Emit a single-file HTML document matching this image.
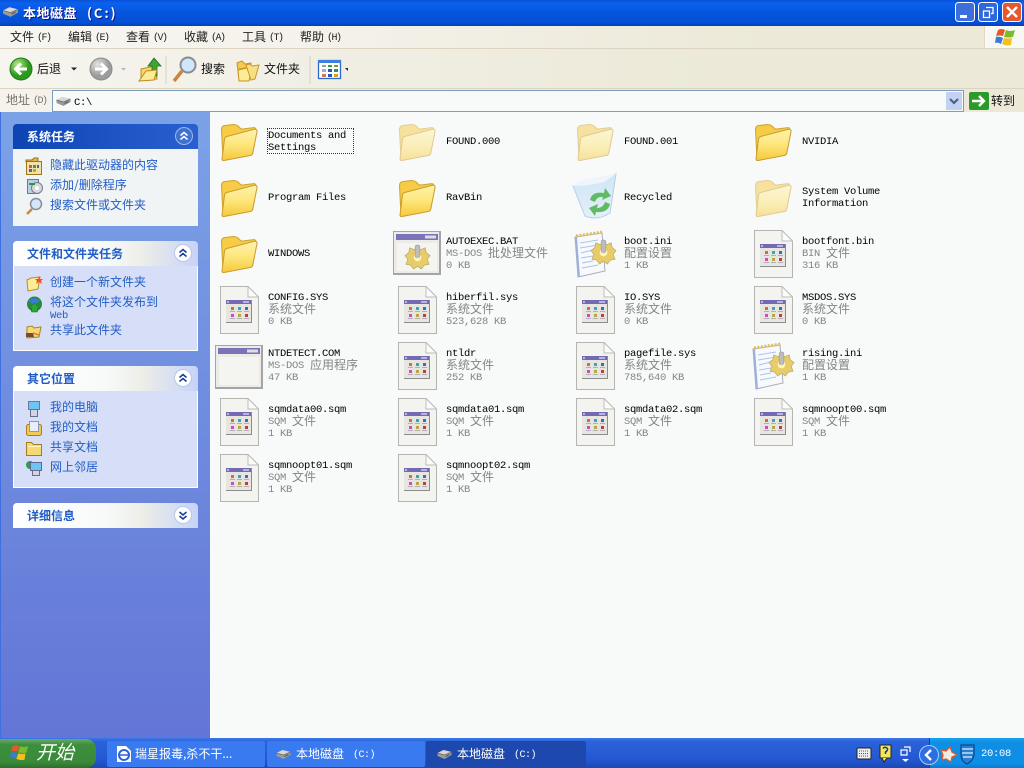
<!DOCTYPE html>
<html lang="zh"><head><meta charset="utf-8"><title>本地磁盘 (C:)</title>
<style>
html,body{margin:0;padding:0;width:1024px;height:768px;overflow:hidden;background:#f8fafa}
body{position:relative;font:10.500px/12px "Liberation Mono","WenQuanYi Zen Hei",monospace;letter-spacing:-.3px;color:#000}
div,svg{position:absolute}
i{font:normal 12px/1px "WenQuanYi Zen Hei","Noto Sans CJK SC",sans-serif;letter-spacing:0;position:relative;top:1px}
.k{font-size:10px;letter-spacing:-1.500px;margin-left:3px}
.t{white-space:pre;line-height:12px;margin-top:1px}
.g{color:#858585}
.m{top:32px;white-space:pre;line-height:12px;color:#222}
.p{left:50px;color:#215dc6;white-space:pre;line-height:12px;margin-top:1px}
.h{left:27px;font:bold 12px/12px "WenQuanYi Zen Hei","Noto Sans CJK SC",sans-serif;letter-spacing:0;color:#215dc6;white-space:pre}
.ph{left:13px;width:185px;height:25px;border-radius:4px 4px 0 0;background:linear-gradient(90deg,#fff 0,#f8fafa 50%,#edeee8 70%,#c6d3f7 100%)}
.pb{left:13px;width:183px;border:1px solid #fff;border-top:0;background:#d6dff7}
.tb{top:741px;height:26px;border-radius:2px;background:#3a7af0}
</style></head><body>
<svg width="0" height="0" style="left:0;top:0">
<defs>
<linearGradient id="fg" x1="0" y1="0" x2="0" y2="1"><stop offset="0" stop-color="#fff3ae"/><stop offset=".5" stop-color="#fde67a"/><stop offset="1" stop-color="#f5c83c"/></linearGradient>
<linearGradient id="rb" x1="0" y1="0" x2="0" y2="1"><stop offset="0" stop-color="#cfe6f6"/><stop offset="1" stop-color="#e4eff8"/></linearGradient>
<symbol id="fo" viewBox="0 0 36 36"><path d="M.5 6Q.5 1.500 4 1.500L12 .5Q16 .5 18 3.500L20 5 32 3.500Q34 3.500 34 6L30 30 2 35Z" fill="#f6cb45" stroke="#cda232"/><path d="M3.500 14Q4 12.500 6 12L33 5Q35.500 5 35 7.500L31 28Q30.500 30 29 30.500L3 35.500Q1 35.800 1 34Z" fill="url(#fg)" stroke="#cb9c2c"/></symbol>
<symbol id="sf" viewBox="0 0 39 48"><path d="M.5.5H28L38.500 11V47.500H.5Z" fill="#f3f3ef" stroke="#b4b4b0"/><path d="M28 .5V11H38.500Z" fill="#fbfbf9" stroke="#bcbcb8"/><rect x="6" y="14" width="26" height="23" fill="#8c8c8c"/><rect x="6" y="14" width="25" height="22" fill="#e6e5e0"/><rect x="6" y="14" width="25" height="4" fill="#736ab4"/><rect x="23" y="15.500" width="6" height="1" fill="#fff"/><rect x="7" y="15.500" width="2" height="1" fill="#fff"/><rect x="11" y="21" width="3" height="3" fill="#d96b3a"/><rect x="18" y="21" width="3" height="3" fill="#35a8b8"/><rect x="25" y="21" width="3" height="3" fill="#3f6cc0"/><rect x="11" y="28" width="3" height="3" fill="#d845c0"/><rect x="18" y="28" width="3" height="3" fill="#b9a842"/><rect x="25" y="28" width="3" height="3" fill="#c83838"/><path d="M10 25.500H15M17 25.500H22M24 25.500H29M10 32.500H15M17 32.500H22M24 32.500H29" stroke="#b0b0bc"/></symbol>
<symbol id="ap" viewBox="0 0 48 44"><rect width="48" height="44" fill="#a4a4a4"/><rect x="1" y="1" width="45" height="41" fill="#ecebe8"/><rect x="3" y="3" width="42" height="6" fill="#7b72b8"/><rect x="32" y="4.500" width="11" height="3" fill="#ddd"/><rect x="4" y="12" width="40" height="28" fill="#f4f4f0"/></symbol>
<symbol id="ge" viewBox="0 0 28 28"><path d="M14 2 17 6 22 4 23 9 27 12 24 16 26 21 21 22 18 26 14 23 10 26 7 22 2 21 4 16 1 12 5 9 6 4 11 6Z" fill="#e8cc6a" stroke="#b8a862" stroke-width=".7"/><circle cx="14" cy="14" r="4" fill="#fff3b5"/><rect x="11.500" y="1" width="5" height="13" rx="2" fill="#bdbdbd" stroke="#8e8e96" stroke-width=".5"/></symbol>
<symbol id="in" viewBox="0 0 44 48"><path d="M2 7 29 3 32 41 5 47Z" fill="#f8f9fd" stroke="#a8adbc"/><path d="M3 6 30 2" stroke="#e0bd55" stroke-width="3" stroke-dasharray="2 1.500"/><path d="M7 13 25 10M7 18 25 15M8 23 20 20M8 28 20 26M9 33 20 31M9 38 25 35" stroke="#a8c4ec"/><path d="M3 7 6 47" stroke="#9cb0e0" stroke-width="2"/><use href="#ge" x="17" y="9" width="27" height="27"/></symbol>
<symbol id="di" viewBox="0 0 16 12"><path d="M1 5 7 2 15 4V7L8 11 1 8Z" fill="#9a9a9a"/><path d="M1 5 7 2 15 4 8 7Z" fill="#d8d8d8"/><path d="M1 5 8 7 15 4" stroke="#666" fill="none" stroke-width=".7"/><path d="M9 8.500 13 6.500" stroke="#5c5c5c"/></symbol>
<symbol id="wl" viewBox="0 0 22 20"><path d="M3 3Q6 1 10 3L8 9Q5 8 1 9Z" fill="#e8562a"/><path d="M11 3Q15 5 20 3L18 10Q14 11 9 10Z" fill="#7cbb30"/><path d="M1 10Q4 9 8 11L6 17Q3 15 0 16Z" fill="#3b7ad8"/><path d="M9 11Q13 12 17 11L16 18Q11 19 7 17Z" fill="#f4c020"/></symbol>
</defs></svg>

<!-- title bar -->
<div style="left:0;top:0;width:1024px;height:26px;background:linear-gradient(180deg,#0a50d8 0,#0b62ee 12%,#0555dd 50%,#0450d6 85%,#0340b8 100%)"></div>
<svg style="left:2px;top:5px" width="17" height="13"><use href="#di" width="17" height="13"/></svg>
<div style="left:23px;top:6px;color:#fff;font:bold 13px/13px 'WenQuanYi Zen Hei','Noto Sans CJK SC',sans-serif;letter-spacing:.5px;white-space:pre;text-shadow:1px 1px #0f1089">本地磁盘<span style="margin-left:10px;letter-spacing:2px">(C:)</span></div>
<svg style="left:955px;top:2px" width="69" height="21">
<rect x=".5" y=".5" width="19" height="19" rx="3" fill="#3c6fdc" stroke="#fff"/><rect x="5" y="13" width="7" height="3" fill="#fff"/>
<rect x="23.500" y=".5" width="19" height="19" rx="3" fill="#2f68da" stroke="#fff"/><path d="M31 5.500h7v6h-2M28.500 9h6v6.500h-6z" fill="none" stroke="#fff" stroke-width="1.300"/>
<rect x="47.500" y=".5" width="19" height="19" rx="3" fill="#e5572e" stroke="#fff"/><path d="M52 5 62 15M62 5 52 15" stroke="#fff" stroke-width="2.400"/>
</svg>

<!-- menu -->
<div style="left:0;top:26px;width:1024px;height:22px;background:linear-gradient(90deg,#f7f6f1 0,#f4f2ea 30%,#ece9d8 75%)"></div>
<div style="left:0;top:48px;width:1024px;height:1px;background:#dcd4c0"></div>
<div class="m" style="left:10px"><i>文件</i><span class="k">(F)</span></div>
<div class="m" style="left:68px"><i>编辑</i><span class="k">(E)</span></div>
<div class="m" style="left:126px"><i>查看</i><span class="k">(V)</span></div>
<div class="m" style="left:184px"><i>收藏</i><span class="k">(A)</span></div>
<div class="m" style="left:242px"><i>工具</i><span class="k">(T)</span></div>
<div class="m" style="left:300px"><i>帮助</i><span class="k">(H)</span></div>
<div style="left:984px;top:26px;width:40px;height:22px;background:#f8f8f5;border-left:1px solid #e0d8c4"></div>
<svg style="left:995px;top:27px" width="22" height="20"><use href="#wl" width="22" height="20"/></svg>

<!-- toolbar -->
<div style="left:0;top:49px;width:1024px;height:39px;background:linear-gradient(90deg,#f6f5ef 0,#f1efe5 30%,#ece9d8 70%)"></div>
<div style="left:0;top:88px;width:1024px;height:1px;background:#dcd4c0"></div>
<svg style="left:8px;top:56px" width="340" height="28">
<defs><radialGradient id="gb" cx=".35" cy=".3"><stop offset="0" stop-color="#bde88a"/><stop offset="1" stop-color="#2a9a1e"/></radialGradient><radialGradient id="gy" cx=".35" cy=".3"><stop offset="0" stop-color="#e4e4e4"/><stop offset="1" stop-color="#9c9c9c"/></radialGradient></defs>
<circle cx="13" cy="13" r="11" fill="url(#gb)" stroke="#1f7a18"/><path d="M19 13H8M13 7.500 7.500 13 13 18.500" fill="none" stroke="#fff" stroke-width="3"/>
<path d="M63 11.500h6l-3 3z" fill="#222"/>
<circle cx="93" cy="13" r="11" fill="url(#gy)" stroke="#8a8a8a"/><path d="M87 13H98M93 7.500 98.500 13 93 18.500" fill="none" stroke="#fff" stroke-width="3"/>
<path d="M113 12h5l-2.500 2.500z" fill="#b5b5b5"/>
<path d="M133 13 147 10 149 23 133 24Z" fill="#f7d767" stroke="#b98f25"/><path d="M144 20V10H140L146 2 153 10H149V20Z" fill="#3ea62e" stroke="#1e6f1b" stroke-width=".8"/><path d="M131 25 138 15 149 14 146 24Z" fill="#fdeb95" stroke="#b98f25"/>
<path d="M158 0V28" stroke="#d8d2bd" stroke-width="1"/>
<circle cx="180" cy="9" r="7.500" fill="#cfe6fb" stroke="#8b8b92" stroke-width="2"/><path d="M174 15 166 25" stroke="#d0843a" stroke-width="3.500"/>
<path d="M229 7 234 5 237 8 243 7 243 11 231 13 231 24Z" fill="#f4c94c" stroke="#c7962a"/><path d="M230 14 244 11 241 25 231 25Z" fill="#fdeb95" stroke="#c7962a"/><path d="M238 9 242 8 244 10 251 9 247 23 243 24Z" fill="#f8e080" stroke="#c7962a"/>
<path d="M302 0V28" stroke="#d8d2bd" stroke-width="1"/>
<rect x="310.500" y="4.500" width="22" height="18" fill="#fff" stroke="#2c6ad0" stroke-width="1.300"/><rect x="310" y="4" width="23" height="3" fill="#3c7fe0"/>
<path d="M314 9h4v2h-4z" fill="#9a9ab0"/><path d="M320 9h4v2h-4z" fill="#3c9a50"/><path d="M326 9h4v2h-4z" fill="#70a040"/><path d="M314 13h4v3h-4z" fill="#9ab0d0"/><path d="M320 13h4v3h-4z" fill="#2858b0"/><path d="M326 13h4v3h-4z" fill="#2a9070"/><path d="M314 18h4v3h-4z" fill="#e07050"/><path d="M320 18h4v3h-4z" fill="#2858b0"/><path d="M326 18h4v3h-4z" fill="#d8a020"/>
<path d="M337 12h6l-3 3z" fill="#222"/>
</svg>
<div class="t" style="left:37px;top:63px;color:#111"><i>后退</i></div>
<div class="t" style="left:201px;top:63px;color:#111"><i>搜索</i></div>
<div class="t" style="left:264px;top:63px;color:#111"><i>文件夹</i></div>

<!-- address -->
<div style="left:0;top:89px;width:1024px;height:23px;background:linear-gradient(90deg,#f5f3ec 0,#ece9d8 70%)"></div>
<div class="t" style="left:6px;top:94px;color:#75736a"><i>地址</i><span class="k">(D)</span></div>
<div style="left:52px;top:90px;width:910px;height:20px;border:1px solid #7f9db9;background:#f8fafa"></div>
<svg style="left:55px;top:95px" width="17" height="12"><use href="#di" width="17" height="12"/></svg>
<div class="t" style="left:74px;top:96px">C:\</div>
<svg style="left:946px;top:92px" width="16" height="18"><rect width="16" height="18" fill="#c2d2f2"/><path d="M4 7 8 11 12 7" fill="none" stroke="#4d6185" stroke-width="2.200"/></svg>
<svg style="left:969px;top:92px" width="20" height="18"><rect width="20" height="18" rx="2" fill="#2b9a2b"/><path d="M3 9H15M10 4 15 9 10 14" fill="none" stroke="#fff" stroke-width="2.400"/></svg>
<div class="t" style="left:991px;top:95px;color:#111"><i>转到</i></div>

<!-- sidebar -->
<div style="left:0;top:112px;width:210px;height:626px;background:linear-gradient(180deg,#7ba2e7 0,#6375d6 100%)"></div>
<div style="left:0;top:112px;width:1px;height:626px;background:#3f70e0"></div>

<div class="ph" style="top:124px;background:linear-gradient(90deg,#0d44b4 0,#1f55c4 60%,#2a5fd0 100%)"></div>
<div class="h" style="top:131px;color:#fff">系统任务</div>
<div style="left:13px;top:149px;width:185px;height:77px;background:#f0f4f5"></div>
<div class="pb" style="top:266px;height:84px"></div>
<div class="ph" style="top:241px"></div>
<div class="h" style="top:248px">文件和文件夹任务</div>
<div class="pb" style="top:391px;height:96px"></div>
<div class="ph" style="top:366px"></div>
<div class="h" style="top:373px">其它位置</div>
<div class="ph" style="top:503px"></div>
<div class="h" style="top:510px">详细信息</div>

<svg style="left:170px;top:124px" width="28" height="420" fill="none">
<circle cx="14" cy="12" r="8.500" fill="#3f71d0" stroke="#9db8ea"/><path d="M10.500 11.500 14 8.500 17.500 11.500M10.500 15.500 14 12.500 17.500 15.500" stroke="#fff" stroke-width="1.500"/>
<circle cx="13" cy="129" r="8.500" fill="#fff" stroke="#b8c6ee"/><path d="M9.500 128.500 13 125.500 16.500 128.500M9.500 132.500 13 129.500 16.500 132.500" stroke="#123a98" stroke-width="1.500"/>
<circle cx="13" cy="254" r="8.500" fill="#fff" stroke="#b8c6ee"/><path d="M9.500 253.500 13 250.500 16.500 253.500M9.500 257.500 13 254.500 16.500 257.500" stroke="#123a98" stroke-width="1.500"/>
<circle cx="13" cy="391" r="8.500" fill="#fff" stroke="#b8c6ee"/><path d="M9.500 388 13 391 16.500 388M9.500 392 13 395 16.500 392" stroke="#123a98" stroke-width="1.500"/>
</svg>

<div class="p" style="top:159px"><i>隐藏此驱动器的内容</i></div>
<div class="p" style="top:179px"><i>添加/删除程序</i></div>
<div class="p" style="top:199px"><i>搜索文件或文件夹</i></div>
<div class="p" style="top:276px"><i>创建一个新文件夹</i></div>
<div class="p" style="top:296px"><i>将这个文件夹发布到</i></div>
<div class="p" style="top:309px">Web</div>
<div class="p" style="top:324px"><i>共享此文件夹</i></div>
<div class="p" style="top:401px"><i>我的电脑</i></div>
<div class="p" style="top:421px"><i>我的文档</i></div>
<div class="p" style="top:441px"><i>共享文档</i></div>
<div class="p" style="top:461px"><i>网上邻居</i></div>

<svg style="left:24px;top:155px" width="20" height="330" fill="none">
<!-- hide -->
<path d="M2 5H8L10 3H14V7H2Z" fill="#e2b54a" stroke="#9a7420"/><rect x="2.500" y="6.500" width="15" height="13" fill="#f2e2a8" stroke="#9a7420"/><rect x="5" y="10" width="3" height="3" fill="#d8583a"/><rect x="9" y="10" width="3" height="3" fill="#3a9a58"/><rect x="13" y="10" width="2" height="3" fill="#3a68c8"/><rect x="5" y="14" width="3" height="3" fill="#3a68c8"/><rect x="9" y="14" width="3" height="3" fill="#d0a020"/>
<!-- add/remove -->
<rect x="3.500" y="24.500" width="11" height="14" fill="#b8cfe8" stroke="#6d7a8c"/><circle cx="13" cy="33" r="5.500" fill="#d8d8e0" stroke="#7a7a88"/><circle cx="13" cy="33" r="2" fill="#fff"/><path d="M5 29H11" stroke="#2a9a3a" stroke-width="2"/>
<!-- search -->
<circle cx="12" cy="49" r="5.500" fill="#cfe6fb" stroke="#8b8b92" stroke-width="1.500"/><path d="M8 54 3 59" stroke="#d0843a" stroke-width="2.500"/>
<!-- new folder -->
<path d="M3 125 7 123 16 122 14 134 4 136Z" fill="#fdeb95" stroke="#b98f25"/><path d="M15 121 16 124 19 124 17 126 18 129 15 127 12 129 13 126 11 124 14 124Z" fill="#f0502a"/>
<!-- publish -->
<circle cx="10.500" cy="149" r="7.500" fill="#2c8a3a"/><path d="M4 146Q9 141 16 145L11 150Z" fill="#3a7ad8"/><path d="M10.500 148 16 153H13.500V157H7.500V153H5Z" fill="#28a838" stroke="#156a20" stroke-width=".5"/>
<!-- share -->
<path d="M3 172 8 171 10 173 17 172 15 182 3 183Z" fill="#f4d977" stroke="#a88424"/><path d="M2 178H9L10 182H2Z" fill="#7a4a2a"/><path d="M9 178 15 180" stroke="#e08030" stroke-width="1.500"/>
<!-- my computer -->
<rect x="4.500" y="246.500" width="11" height="8" fill="#6ec4f2" stroke="#6c78a0"/><rect x="6.500" y="254.500" width="7" height="7" fill="#d2d4e4" stroke="#6c6c8c"/>
<!-- my docs -->
<rect x="2.500" y="269.500" width="15" height="11" rx="2" fill="#f2cb54" stroke="#a87c18"/><rect x="5.500" y="266.500" width="9" height="10" fill="#e6eefa" stroke="#8a9ab4"/>
<!-- shared docs -->
<path d="M2.500 287.500H7.500L9.500 289.500H17.500V300.500H2.500Z" fill="#f4d977" stroke="#a87c18"/><rect x="4" y="291" width="13" height="1" fill="#fff6c2"/>
<!-- network -->
<circle cx="6" cy="310" r="4" fill="#2f9a50"/><rect x="6.500" y="307.500" width="11" height="8" fill="#6ec4f2" stroke="#5c6890"/><rect x="8.500" y="315.500" width="7" height="5" fill="#d2d4e4" stroke="#6c6c8c"/>
</svg>

<!-- file view -->
<div class="t" style="left:268px;top:129px">Documents and
Settings</div>
<div style="left:267px;top:128px;width:85px;height:24px;border:1px dotted #333"></div>

<svg style="left:221px;top:124px" width="37" height="37"><use href="#fo" width="37" height="37"/></svg>
<svg style="left:399px;top:124px;opacity:.5" width="37" height="37"><use href="#fo" width="37" height="37"/></svg>
<svg style="left:577px;top:124px;opacity:.5" width="37" height="37"><use href="#fo" width="37" height="37"/></svg>
<svg style="left:755px;top:124px" width="37" height="37"><use href="#fo" width="37" height="37"/></svg>
<svg style="left:221px;top:180px" width="37" height="37"><use href="#fo" width="37" height="37"/></svg>
<svg style="left:399px;top:180px" width="37" height="37"><use href="#fo" width="37" height="37"/></svg>
<svg style="left:755px;top:180px;opacity:.5" width="37" height="37"><use href="#fo" width="37" height="37"/></svg>
<svg style="left:221px;top:236px" width="37" height="37"><use href="#fo" width="37" height="37"/></svg>

<!-- recycle -->
<svg style="left:572px;top:173px" width="45" height="48"><path d="M1 13Q22 9 44 1L38 40Q26 48 13 43Z" fill="url(#rb)" stroke="#b8d0e4"/><path d="M1 13Q16 13 32 9L44 1Q22 4 7 8Z" fill="#eef6fc"/><g transform="translate(5 3)"><path d="M13 24Q15 15 27 17L28 12 34 20 25 24 26 21Q20 20 18 26ZM33 28Q31 37 19 36L18 40 12 32 21 28 20 32Q26 32 28 26Z" fill="#5fbb64"/></g></svg>

<!-- app windows -->
<svg style="left:393px;top:231px" width="48" height="44"><use href="#ap" width="48" height="44"/><use href="#ge" x="11" y="13" width="27" height="27"/></svg>
<svg style="left:215px;top:345px" width="48" height="44"><use href="#ap" width="48" height="44"/></svg>

<!-- ini -->
<svg style="left:573px;top:230px" width="44" height="48"><use href="#in" width="44" height="48"/></svg>
<svg style="left:751px;top:342px" width="44" height="48"><use href="#in" width="44" height="48"/></svg>

<!-- sys files -->
<svg style="left:754px;top:230px" width="39" height="48"><use href="#sf" width="39" height="48"/></svg>
<svg style="left:220px;top:286px" width="39" height="48"><use href="#sf" width="39" height="48"/></svg>
<svg style="left:398px;top:286px" width="39" height="48"><use href="#sf" width="39" height="48"/></svg>
<svg style="left:576px;top:286px" width="39" height="48"><use href="#sf" width="39" height="48"/></svg>
<svg style="left:754px;top:286px" width="39" height="48"><use href="#sf" width="39" height="48"/></svg>
<svg style="left:398px;top:342px" width="39" height="48"><use href="#sf" width="39" height="48"/></svg>
<svg style="left:576px;top:342px" width="39" height="48"><use href="#sf" width="39" height="48"/></svg>
<svg style="left:220px;top:398px" width="39" height="48"><use href="#sf" width="39" height="48"/></svg>
<svg style="left:398px;top:398px" width="39" height="48"><use href="#sf" width="39" height="48"/></svg>
<svg style="left:576px;top:398px" width="39" height="48"><use href="#sf" width="39" height="48"/></svg>
<svg style="left:754px;top:398px" width="39" height="48"><use href="#sf" width="39" height="48"/></svg>
<svg style="left:220px;top:454px" width="39" height="48"><use href="#sf" width="39" height="48"/></svg>
<svg style="left:398px;top:454px" width="39" height="48"><use href="#sf" width="39" height="48"/></svg>

<div class="t" style="left:446px;top:135px">FOUND.000</div>
<div class="t" style="left:624px;top:135px">FOUND.001</div>
<div class="t" style="left:802px;top:135px">NVIDIA</div>
<div class="t" style="left:268px;top:191px">Program Files</div>
<div class="t" style="left:446px;top:191px">RavBin</div>
<div class="t" style="left:624px;top:191px">Recycled</div>
<div class="t" style="left:802px;top:185px">System Volume
Information</div>
<div class="t" style="left:268px;top:247px">WINDOWS</div>

<div class="t" style="left:446px;top:235px">AUTOEXEC.BAT
<span class="g">MS-DOS <i>批处理文件</i>
0 KB</span></div>
<div class="t" style="left:624px;top:235px">boot.ini
<span class="g"><i>配置设置</i>
1 KB</span></div>
<div class="t" style="left:802px;top:235px">bootfont.bin
<span class="g">BIN <i>文件</i>
316 KB</span></div>

<div class="t" style="left:268px;top:291px">CONFIG.SYS
<span class="g"><i>系统文件</i>
0 KB</span></div>
<div class="t" style="left:446px;top:291px">hiberfil.sys
<span class="g"><i>系统文件</i>
523,628 KB</span></div>
<div class="t" style="left:624px;top:291px">IO.SYS
<span class="g"><i>系统文件</i>
0 KB</span></div>
<div class="t" style="left:802px;top:291px">MSDOS.SYS
<span class="g"><i>系统文件</i>
0 KB</span></div>

<div class="t" style="left:268px;top:347px">NTDETECT.COM
<span class="g">MS-DOS <i>应用程序</i>
47 KB</span></div>
<div class="t" style="left:446px;top:347px">ntldr
<span class="g"><i>系统文件</i>
252 KB</span></div>
<div class="t" style="left:624px;top:347px">pagefile.sys
<span class="g"><i>系统文件</i>
785,640 KB</span></div>
<div class="t" style="left:802px;top:347px">rising.ini
<span class="g"><i>配置设置</i>
1 KB</span></div>

<div class="t" style="left:268px;top:403px">sqmdata00.sqm
<span class="g">SQM <i>文件</i>
1 KB</span></div>
<div class="t" style="left:446px;top:403px">sqmdata01.sqm
<span class="g">SQM <i>文件</i>
1 KB</span></div>
<div class="t" style="left:624px;top:403px">sqmdata02.sqm
<span class="g">SQM <i>文件</i>
1 KB</span></div>
<div class="t" style="left:802px;top:403px">sqmnoopt00.sqm
<span class="g">SQM <i>文件</i>
1 KB</span></div>

<div class="t" style="left:268px;top:459px">sqmnoopt01.sqm
<span class="g">SQM <i>文件</i>
1 KB</span></div>
<div class="t" style="left:446px;top:459px">sqmnoopt02.sqm
<span class="g">SQM <i>文件</i>
1 KB</span></div>

<!-- taskbar -->
<div style="left:0;top:738px;width:1024px;height:30px;background:linear-gradient(180deg,#3a78e8 0,#2a62d8 12%,#2458d2 70%,#1c48b4 100%)"></div>
<div style="left:0;top:739px;width:96px;height:29px;border-radius:0 10px 10px 0;background:linear-gradient(180deg,#6aa868 0,#3c8f3c 20%,#3a8a3a 80%,#2c6e2c 100%)"></div>
<svg style="left:10px;top:743px" width="20" height="19"><use href="#wl" width="20" height="19"/></svg>
<div style="left:36px;top:741px;color:#fff;font:italic 19px/21px 'Noto Sans CJK SC','WenQuanYi Zen Hei',sans-serif;letter-spacing:0">开始</div>
<div class="tb" style="left:107px;width:158px"></div>
<div class="tb" style="left:267px;width:158px"></div>
<div class="tb" style="left:426px;width:160px;background:#1d49ae"></div>
<svg style="left:116px;top:745px" width="16" height="18"><path d="M1 1H10L15 6V17H1Z" fill="#fff"/><circle cx="8" cy="10" r="5" fill="none" stroke="#2a62d8" stroke-width="2"/><path d="M3 10H13" stroke="#2a62d8" stroke-width="1.500"/></svg>
<svg style="left:275px;top:748px" width="17" height="12"><use href="#di" width="17" height="12"/></svg>
<svg style="left:436px;top:748px" width="17" height="12"><use href="#di" width="17" height="12"/></svg>
<div class="t" style="left:135px;top:748px;color:#fff"><i>瑞星报毒,杀不干...</i></div>
<div class="t" style="left:296px;top:748px;color:#fff"><i>本地磁盘</i><span class="k" style="margin-left:9px;letter-spacing:-.5px">(C:)</span></div>
<div class="t" style="left:457px;top:748px;color:#fff"><i>本地磁盘</i><span class="k" style="margin-left:9px;letter-spacing:-.5px">(C:)</span></div>

<!-- tray -->
<div style="left:929px;top:738px;width:95px;height:30px;background:linear-gradient(180deg,#19a4f0 0,#0e8ee4 15%,#0e8ee4 85%,#0c7ad0 100%);border-left:1px solid #0a3ea8"></div>
<svg style="left:855px;top:744px" width="125" height="22" fill="none">
<rect x="2" y="4" width="14" height="11" rx="1" fill="#eee" stroke="#222"/><path d="M4 7h10M4 9.500h10M4 12h10" stroke="#555" stroke-dasharray="1 1"/>
<rect x="25" y="1" width="11" height="13" fill="#f6e75a" stroke="#222"/><path d="M28 4.500Q30 2 32.500 4.500 33 6.500 30.500 8V10" stroke="#123a98" stroke-width="1.500"/><path d="M27 14 29 18 32 14" fill="#f6e75a" stroke="#222"/>
<path d="M49 3h6v5M46 6h6v5h-6z" stroke="#fff" stroke-width="1.200"/><path d="M47 15h7l-3.500 3z" fill="#fff"/>
<circle cx="74" cy="11" r="9.500" fill="#2d6ee0" stroke="#a9cbf6"/><path d="M76 6 71 11 76 16" stroke="#fff" stroke-width="2.400"/>
<path d="M86 6 91 7 95 3 97 8 102 11 97 13 96 18 91 15 87 16 88 11Z" fill="#f0ece0" stroke="#d85a30" stroke-width="1.300"/>
<path d="M106 1H119V11Q118 17 112 20 106 17 106 11Z" fill="#2a7ed0" stroke="#0c3a80"/><path d="M107 5H118M107 9H118M108 13H117" stroke="#d8f0ff" stroke-width="1.300"/>
</svg>
<div class="t" style="left:981px;top:747px;color:#fff">20:08</div>
</body></html>
